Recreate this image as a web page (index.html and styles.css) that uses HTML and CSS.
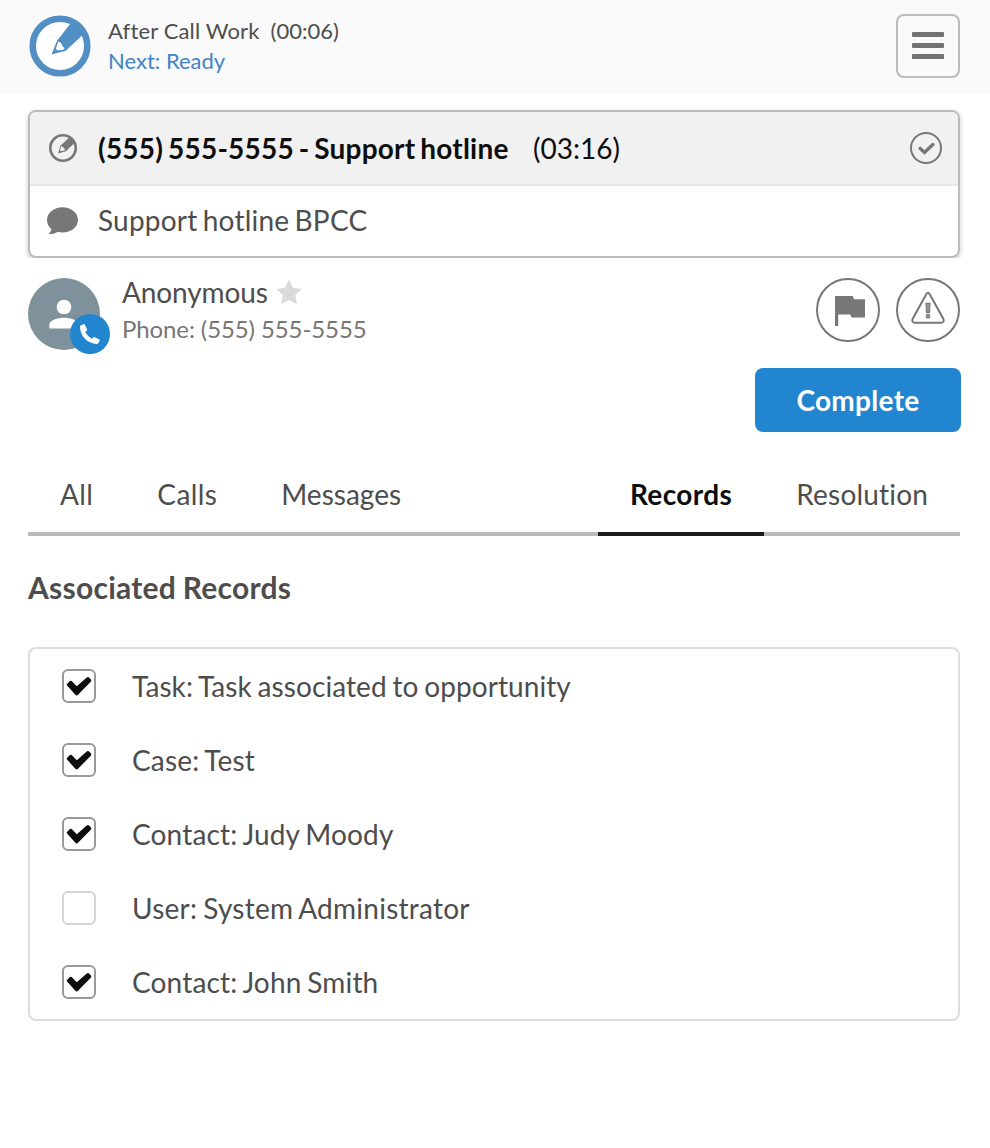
FILE: index.html
```html
<!DOCTYPE html>
<html lang="en">
<head>
<meta charset="utf-8">
<title>After Call Work</title>
<link rel="stylesheet" href="styles.css">
</head>
<body>
<header class="topbar">
  <svg class="status-icon" width="64" height="64" viewBox="0 0 64 64">
    <circle cx="32" cy="32" r="31.5" fill="#fff"/>
    <circle cx="32" cy="32" r="27.3" fill="none" stroke="#528fc4" stroke-width="6.6"/>
    <path fill="#528fc4" fill-rule="evenodd" d="M43.3 8.5 55.5 20 54 21.6 37.8 36.8 23.5 40.6 29 26.8ZM30.3 27.4 27.8 34.8 29.4 36.3 34.8 36 36.6 34.2 34.4 32 33 28.8Z"/>
  </svg>
  <div class="status">
    <div class="status-line"><span class="status-name">After Call Work</span><span>(00:06)</span></div>
    <div class="status-next">Next: Ready</div>
  </div>
  <button class="menu" aria-label="Menu"><span class="bar"></span><span class="bar"></span><span class="bar"></span></button>
</header>
<main class="content">
  <section class="call">
    <div class="call-head">
      <svg class="call-icon" width="32" height="32" viewBox="0 0 32 32">
        <circle cx="16" cy="16" r="12.7" fill="none" stroke="#777" stroke-width="2.6"/>
        <path fill="#777" fill-rule="evenodd" d="M22.3 5.6 28 10.6 18.8 19.3 11 21.4 13.6 13.4ZM14.4 14 13 18.2 14.2 19.2 17.4 18.4 18 17.2 16.2 15.2Z"/>
      </svg>
      <span class="call-name">(555) 555-5555 - Support hotline</span>
      <span class="call-time">(03:16)</span>
      <svg class="call-done" width="32" height="32" viewBox="0 0 32 32">
        <circle cx="16" cy="16" r="15" fill="none" stroke="#777" stroke-width="2"/>
        <path d="M10.2 16.4 14.5 20.4 22.9 12.6" fill="none" stroke="#777" stroke-width="3.4" stroke-linecap="round"/>
      </svg>
    </div>
    <div class="call-body">
      <svg class="call-icon" width="32" height="32" viewBox="0 0 32 32">
        <path fill="#777" d="M15.5 2.2C24 2.2 31 7.9 31 14.9S24 27.4 15.5 27.4Q13 27.4 10.7 26.8C8.2 28.6 5 29.3 1.4 29 3 27.6 4.1 26 4.4 24 1.6 21.7 0 18.5 0 14.9 0 7.9 7 2.2 15.5 2.2Z"/>
      </svg>
      <span class="call-queue">Support hotline BPCC</span>
    </div>
  </section>
  <section class="person">
    <div class="avatar">
      <svg width="72" height="72" viewBox="0 0 72 72">
        <circle cx="36" cy="36" r="36" fill="#7f919b"/>
        <circle cx="36" cy="29" r="7.3" fill="#fff"/>
        <path fill="#fff" d="M21.3 50.5V46.8C21.3 42 30 39.7 36 39.7S50.7 42 50.7 46.8V50.5Z"/>
      </svg>
      <svg class="phone-badge" width="40" height="40" viewBox="0 0 40 40">
        <circle cx="20" cy="20" r="20" fill="#2185d0"/>
        <path fill="#fff" d="M10.4 11.8 13.5 10Q14.3 9.8 14.7 10.5L17 15.2Q17.2 15.9 16.7 16.4L15.1 18.1Q17.5 22.3 21.7 24.8L23.6 23.3Q24.2 22.8 24.9 23.2L29.4 25.5Q30.1 25.9 29.8 26.6L28.2 29.3Q27.8 29.9 27 29.9C17 29.9 10 21.5 10 12.6Q10 12.1 10.4 11.8Z"/>
      </svg>
    </div>
    <div class="who">
      <div class="who-name"><span>Anonymous</span>
        <svg width="26" height="26" viewBox="0 0 26 26"><path fill="#dadada" d="M13 .6 16.8 8.8 25.8 9.9 19.2 16 21 25.2 13 20.9 5 25.2 6.8 16 .2 9.9 9.2 8.8Z"/></svg>
      </div>
      <div class="who-phone">Phone: (555) 555-5555</div>
    </div>
    <div class="actions">
      <button class="round" aria-label="Flag"><svg width="60" height="60" viewBox="0 0 60 60"><path fill="#777" d="M17 16H34.7L35.9 19.2H47V37.6H33.6L32.2 34.4H20.2V46H17Z"/></svg></button>
      <button class="round" aria-label="Alert"><svg width="60" height="60" viewBox="0 0 60 60"><path d="M28.4 14Q30 11.6 31.6 14L45.4 39Q46.5 42.4 43.5 42.7H16.5Q13.5 42.4 14.6 39Z" fill="none" stroke="#777" stroke-width="2"/><path d="M28.1 23.5H31.9L31.4 32.5H28.6Z" fill="#999" stroke="#777" stroke-width="1.3"/><circle cx="30" cy="36.3" r="1.8" fill="#999" stroke="#777" stroke-width="1.2"/></svg></button>
    </div>
  </section>
  <button class="complete">Complete</button>
  <nav class="tabs">
    <a class="tab tab-short">All</a><a class="tab tab-short">Calls</a><a class="tab">Messages</a>
    <a class="tab tab-right tab-active">Records</a><a class="tab tab-last">Resolution</a>
  </nav>
  <h2 class="title">Associated Records</h2>
  <ul class="records">
    <li class="record record-long"><span class="box box-on"><svg width="30" height="30" viewBox="0 0 30 30"><path d="M3 14.6Q2.3 13.6 3.2 12.8L5.6 10.2Q6.6 9.3 7.7 10.1L12.8 15.2 22.7 6.4Q24 5.5 25.1 6.4L27 8.5Q27.7 9.6 26.8 10.7L14 23.8Q12.7 25.2 11.4 23.8Z"/></svg></span><span>Task: Task associated to opportunity</span></li>
    <li class="record"><span class="box box-on"><svg width="30" height="30" viewBox="0 0 30 30"><path d="M3 14.6Q2.3 13.6 3.2 12.8L5.6 10.2Q6.6 9.3 7.7 10.1L12.8 15.2 22.7 6.4Q24 5.5 25.1 6.4L27 8.5Q27.7 9.6 26.8 10.7L14 23.8Q12.7 25.2 11.4 23.8Z"/></svg></span><span>Case: Test</span></li>
    <li class="record"><span class="box box-on"><svg width="30" height="30" viewBox="0 0 30 30"><path d="M3 14.6Q2.3 13.6 3.2 12.8L5.6 10.2Q6.6 9.3 7.7 10.1L12.8 15.2 22.7 6.4Q24 5.5 25.1 6.4L27 8.5Q27.7 9.6 26.8 10.7L14 23.8Q12.7 25.2 11.4 23.8Z"/></svg></span><span>Contact: Judy Moody</span></li>
    <li class="record record-off"><span class="box"></span><span>User: System Administrator</span></li>
    <li class="record"><span class="box box-on"><svg width="30" height="30" viewBox="0 0 30 30"><path d="M3 14.6Q2.3 13.6 3.2 12.8L5.6 10.2Q6.6 9.3 7.7 10.1L12.8 15.2 22.7 6.4Q24 5.5 25.1 6.4L27 8.5Q27.7 9.6 26.8 10.7L14 23.8Q12.7 25.2 11.4 23.8Z"/></svg></span><span>Contact: John Smith</span></li>
  </ul>
</main>
</body>
</html>
```

FILE: styles.css
```css
* { box-sizing: border-box; }
body { margin: 0; background: #fff; color: #4d4d4d; font-family: Lato, sans-serif; font-size: 28px; line-height: 36px; font-variant-ligatures: none; }
svg { display: block; flex: none; }
button { font: inherit; margin: 0; padding: 0; cursor: pointer; }

.topbar { display: flex; height: 94px; padding: 14px 30px 0 28px; background: #fafafa; }
.status { flex: 1; margin-left: 16px; padding-top: 2px; font-size: 22px; line-height: 30px; }
.status-line { display: flex; gap: 11px; }
.status-name { letter-spacing: .15px; }
.status-next { color: #4183c4; }
.menu { display: flex; flex-direction: column; align-items: center; justify-content: center; gap: 6px; width: 64px; height: 64px; padding-bottom: 1px; border: 2px solid #bbb; border-radius: 8px; background: #fafafa; }
.bar { width: 32px; height: 5px; border-radius: 1px; background: #737373; }

.content { padding: 16px 30px 0 28px; }
.call { height: 148px; border: 2px solid #bbb; border-radius: 8px; box-shadow: 0 2px 5px rgba(0,0,0,.22); clip-path: inset(-6px -6px 0 -6px); overflow: hidden; }
.call-head, .call-body { display: flex; align-items: center; padding: 0 16px 0 17px; }
.call-head { height: 74px; background: #f1f1f1; border-bottom: 2px solid #e6e6e6; color: #0d0d0d; }
.call-body { height: 70px; }
.call-icon { margin-right: 19px; }
.call-name { font-weight: 700; letter-spacing: .22px; word-spacing: -2.2px; }
.call-time { margin-left: 24.5px; }
.call-done { margin-left: auto; }
.call-queue { margin-bottom: 2px; letter-spacing: .2px; word-spacing: -2px; }

.person { display: flex; margin-top: 20px; }
.avatar { position: relative; width: 72px; height: 76px; }
.phone-badge { position: absolute; left: 42px; top: 36px; }
.who { flex: 1; margin-left: 22px; }
.who-name { display: flex; gap: 8px; height: 36px; line-height: 29px; letter-spacing: -.1px; }
.who-name svg { margin-top: 1px; }
.who-phone { font-size: 24px; line-height: 30px; letter-spacing: -.1px; color: #767676; }
.actions { display: flex; gap: 16px; }
.round { width: 64px; height: 64px; border: 2px solid #777; border-radius: 50%; background: #fff; }

.complete { display: block; width: 206px; height: 64px; margin: 14px -1px 0 auto; border: 0; border-radius: 8px; background: #2185d0; color: #fff; font-weight: 700; letter-spacing: .3px; }

.tabs { display: flex; height: 78px; margin-top: 26px; box-shadow: inset 0 -4px #bbb; }
.tab { height: 78px; padding: 18px 32px 0; }
.tab-short { letter-spacing: .4px; }
.tab-right { margin-left: auto; }
.tab-active { border-bottom: 4px solid #1b1c1d; color: #0d0d0d; font-weight: 700; letter-spacing: .4px; }
.tab-last { letter-spacing: .18px; }

.title { margin: 33px 0 42px; font-size: 30px; line-height: 36px; font-weight: 700; letter-spacing: .25px; word-spacing: -1px; }
.records { margin: 0; padding: 0 32px; height: 374px; border: 2px solid #ddd; border-radius: 8px; list-style: none; letter-spacing: .16px; word-spacing: -1.5px; }
.record { display: flex; align-items: center; gap: 36px; height: 74px; }
.record-long { letter-spacing: .08px; }
.record-off { letter-spacing: .25px; }
.box { width: 34px; height: 34px; border: 2px solid #d4d4d4; border-radius: 6px; }
.box-on { border-color: #999; }
.box path { fill: #0d0d0d; }
```
